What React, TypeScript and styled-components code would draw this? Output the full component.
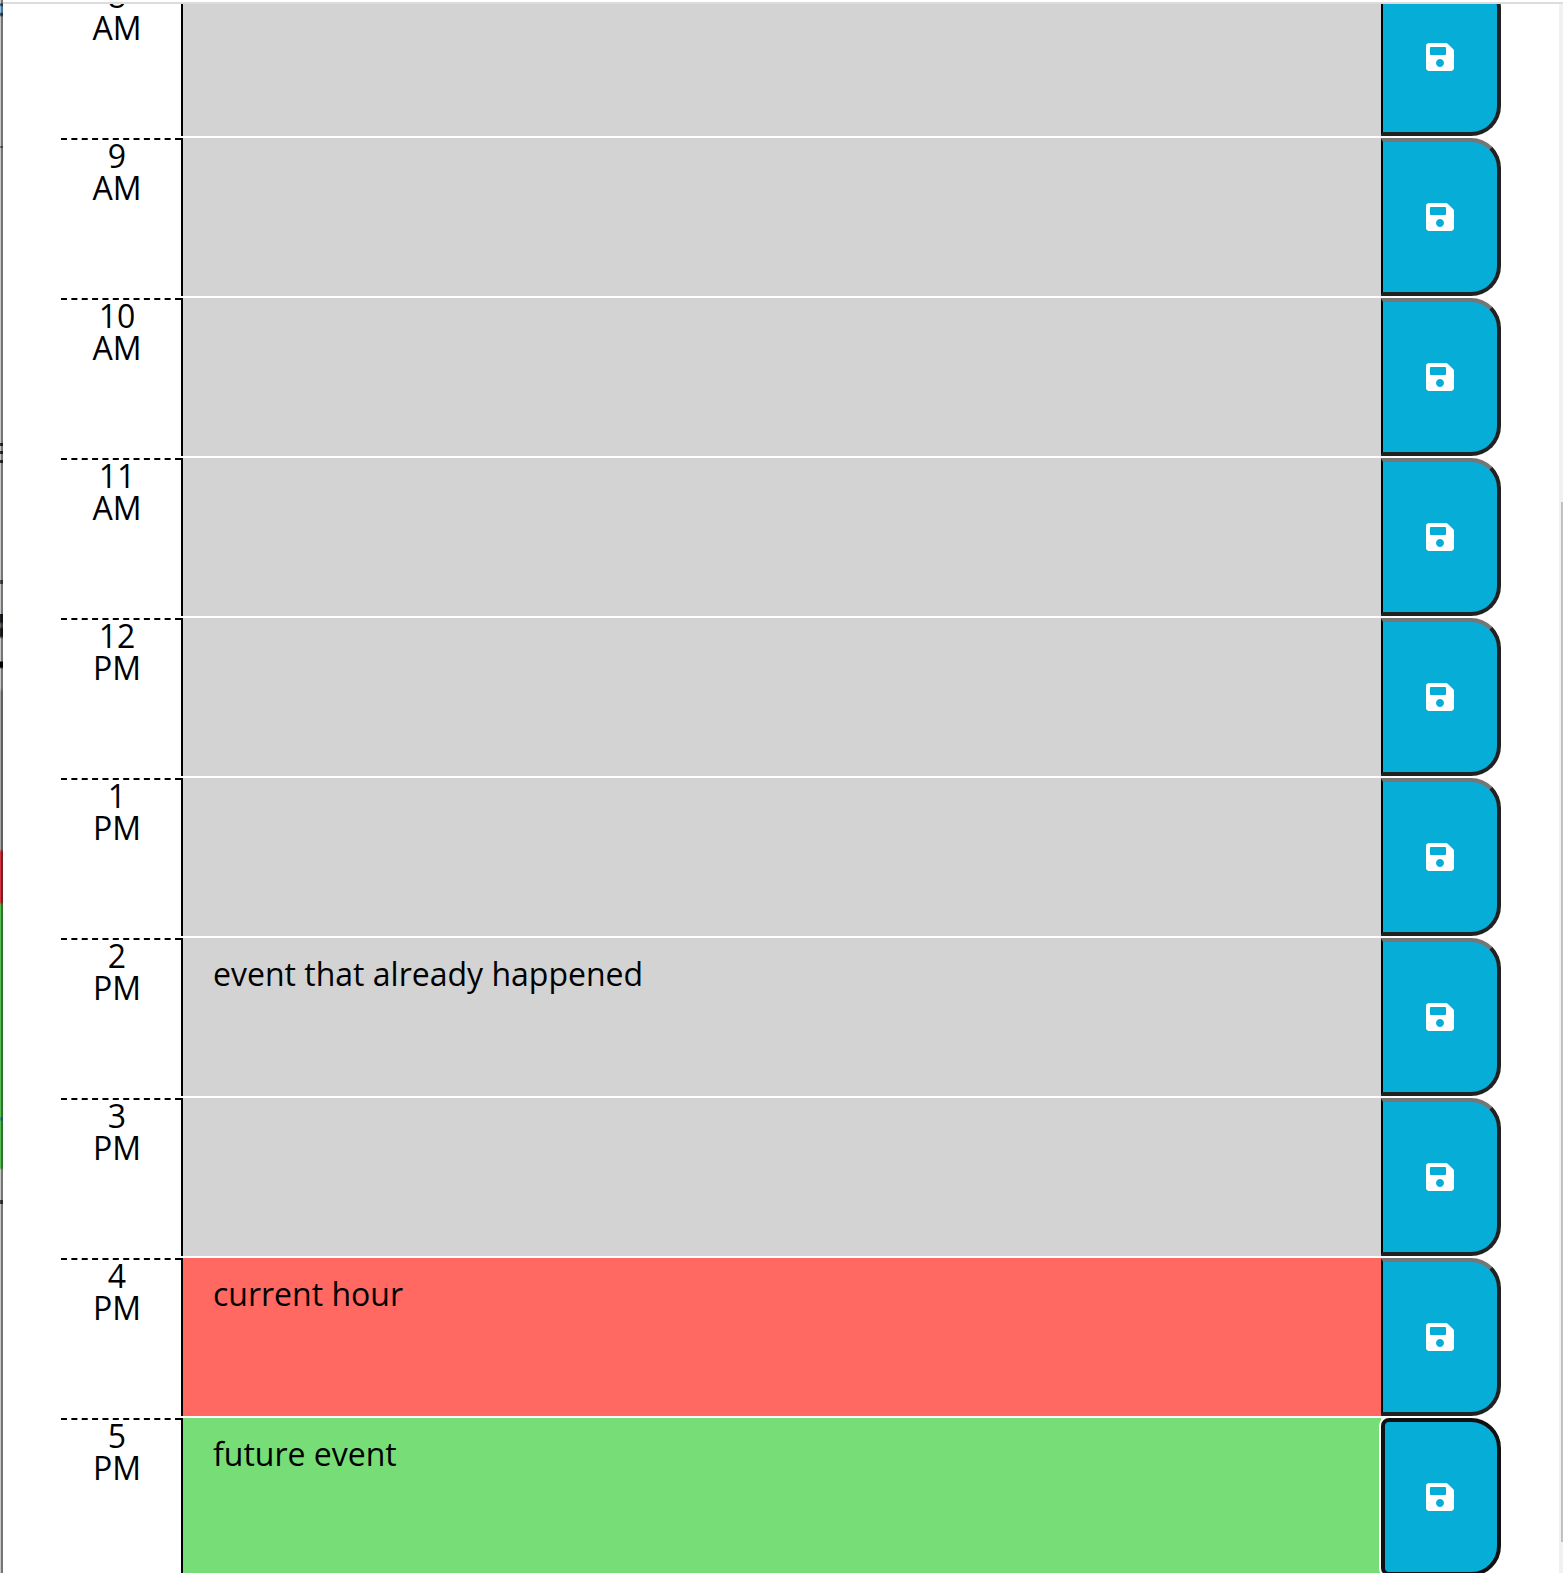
import React, { useLayoutEffect, useRef } from "react";
import styled, { createGlobalStyle, css } from "styled-components";
import { FaSave } from "react-icons/fa";

const GlobalStyle = createGlobalStyle`
  *, *::before, *::after { box-sizing: border-box; }
  body {
    margin: 0;
    background: #fff;
    color: #000;
    font-family: "Open Sans", "Noto Sans", sans-serif;
  }
`;

const Window = styled.div`
  display: grid;
  grid-template-columns: 3px minmax(0, 1fr) 4px;
  grid-template-rows: 4px minmax(0, 1fr);
  height: 100vh;
  overflow: hidden;
`;

/* The sliver of the window behind, seen past the left edge. */
const Backdrop = styled.div`
  grid-row: 1 / -1;
  border-right: 2px solid rgba(0, 0, 0, 0.42);
  background: linear-gradient(
    #c8c8c8 3px,
    #456 4px 5px,
    #8cc4ee 7px 12px,
    #345 14px 15px,
    #c8c8c8 17px 146px,
    #777 146px 148px,
    #c8c8c8 148px 443px,
    #333 443px 446px,
    #c8c8c8 446px 451px,
    #333 451px 454px,
    #c8c8c8 454px 460px,
    #333 460px 463px,
    #c8c8c8 463px 580px,
    #555 580px 584px,
    #c8c8c8 584px 614px,
    #1c2226 614px 622px,
    #666 624px 627px,
    #222 629px 636px,
    #c8c8c8 639px 661px,
    #000 662px 667px,
    #c8c8c8 669px 688px,
    #a5a5a5 692px 849px,
    #d23440 852px 902px,
    #58bf52 905px 1117px,
    #3b8f80 1118px 1120px,
    #58bf52 1121px 1168px,
    #c8c8c8 1170px 1200px,
    #444 1200px 1204px,
    #c8c8c8 1204px
  );
  background-origin: border-box;
`;

const TopBar = styled.div`
  grid-column: 2 / -1;
  border-bottom: 2px solid #dcdcdc;
`;

const Planner = styled.main`
  padding: 0 58px;
  overflow: hidden;
`;

const ScrollTrack = styled.div`
  padding: 498px 0 31px 2px;
  background: #f1f1f1;
`;

const ScrollThumb = styled.div`
  height: 100%;
  background: #c1c1c1;
`;

const TimeBlock = styled.div`
  display: grid;
  grid-template-columns: minmax(0, 1fr) minmax(0, 10fr) minmax(0, 1fr);
  height: 158px;
  margin-bottom: 2px;
`;

const Hour = styled.label`
  padding: 0 34px 0 26px;
  border-top: 2px dashed #000;
  font-size: 32px;
  font-weight: 400;
  line-height: 32px;
  text-align: center;
`;

type Phase = "past" | "present" | "future";

const phaseColors: Record<Phase, string> = {
  past: "#d3d3d3",
  present: "#ff6961",
  future: "#77dd77",
};

const Description = styled.textarea<{ $phase: Phase }>`
  display: block;
  width: 100%;
  height: 100%;
  margin: 0;
  padding: 12px 30px;
  border: 0;
  border-left: 2px solid #000;
  border-radius: 0;
  outline: 0;
  overflow: hidden;
  resize: none;
  background: ${({ $phase }) => phaseColors[$phase]};
  color: #000;
  font-family: inherit;
  font-size: 32px;
  font-weight: 400;
  line-height: 48px;
`;

const SaveButton = styled.button<{ $active: boolean }>`
  display: flex;
  align-items: center;
  justify-content: center;
  padding: 0;
  border: 4px solid #212121;
  border-top-color: #767676;
  border-left: 2px solid #000;
  border-radius: 0 30px 30px 0;
  background: #06aed7;
  color: #fff;
  font-size: 32px;
  cursor: pointer;

  ${({ $active }) =>
    $active &&
    css`
      padding-right: 2px;
      border: 4px solid #101010;
      border-radius: 8px 30px 30px 8px;
      box-shadow: 0 0 0 2px #fff;
    `}
`;

interface Slot {
  time: string;
  phase: Phase;
  text?: string;
  active?: boolean;
}

const slots: Slot[] = [
  { time: "8 AM", phase: "past" },
  { time: "9 AM", phase: "past" },
  { time: "10 AM", phase: "past" },
  { time: "11 AM", phase: "past" },
  { time: "12 PM", phase: "past" },
  { time: "1 PM", phase: "past" },
  { time: "2 PM", phase: "past", text: "event that already happened" },
  { time: "3 PM", phase: "past" },
  { time: "4 PM", phase: "present", text: "current hour" },
  { time: "5 PM", phase: "future", text: "future event", active: true },
];

const INITIAL_SCROLL = 26;

export default function App() {
  const planner = useRef<HTMLElement>(null);

  useLayoutEffect(() => {
    if (planner.current) planner.current.scrollTop = INITIAL_SCROLL;
  }, []);

  return (
    <>
      <GlobalStyle />
      <Window>
        <Backdrop />
        <TopBar />
        <Planner ref={planner}>
          {slots.map(({ time, phase, text, active }) => {
            const id = `slot-${time.replace(" ", "-")}`;
            return (
              <TimeBlock key={time}>
                <Hour htmlFor={id}>{time}</Hour>
                <Description id={id} $phase={phase} defaultValue={text} spellCheck={false} />
                <SaveButton type="button" aria-label={`Save ${time}`} $active={Boolean(active)}>
                  <FaSave aria-hidden="true" />
                </SaveButton>
              </TimeBlock>
            );
          })}
        </Planner>
        <ScrollTrack>
          <ScrollThumb />
        </ScrollTrack>
      </Window>
    </>
  );
}
